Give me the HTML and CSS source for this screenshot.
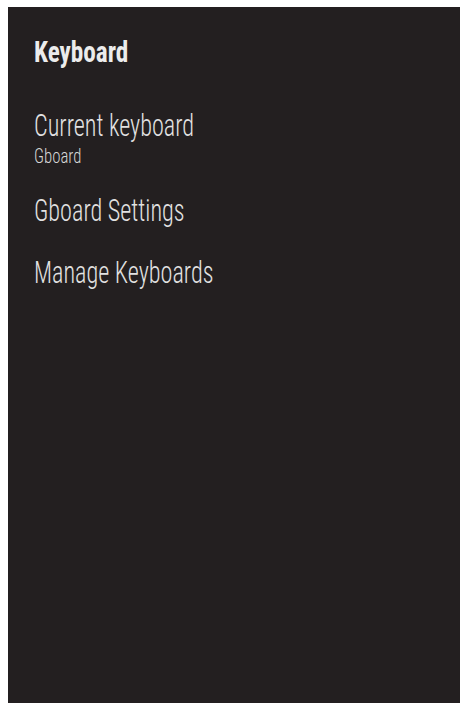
FILE: index.html
```html
<!doctype html>
<html lang="en">
<head>
    <meta charset="UTF-8">
    <meta name="viewport" content="width=device-width, initial-scale=1.0">
    <title>Keyboard</title>
    <link rel="stylesheet" href="styles.css">
</head>
<body>
    <div class="panel">
        <h1 class="panel-title"><span class="squeeze">Keyboard</span></h1>
        <ul class="menu">
            <li class="menu-item two-line">
                <span class="item-title squeeze">Current keyboard</span>
                <span class="item-sub squeeze">Gboard</span>
            </li>
            <li class="menu-item">
                <span class="item-title squeeze">Gboard Settings</span>
            </li>
            <li class="menu-item">
                <span class="item-title squeeze">Manage Keyboards</span>
            </li>
        </ul>
    </div>
</body>
</html>
```
FILE: styles.css
```css
*{
    margin: 0;
    padding: 0;
}
body{
    background-color: #fff;
    padding: 7px 8px 0 8px;
    font-family: "Roboto Condensed", Roboto, sans-serif;
}
.panel{
    width: 452px;
    height: 696px;
    background-color: #231f20;
    padding: 27px 26px 0 26px;
    box-sizing: border-box;
    overflow: hidden;
}
/* the font is narrower than anything installed, so squeeze it sideways */
.squeeze{
    display: inline-block;
    transform-origin: left center;
    white-space: nowrap;
}
.panel-title{
    font-size: 29px;
    font-weight: 700;
    line-height: 36px;
    color: #ececec;
    margin-bottom: 25px;
}
.panel-title .squeeze{
    transform: scaleX(0.87);
}
.menu{
    list-style: none;
}
.menu-item{
    padding: 15px 0;
    display: flex;
    flex-direction: column;
    align-items: flex-start;
}
.menu-item.two-line{
    padding-bottom: 10px;
}
.item-title{
    font-size: 31px;
    font-weight: 300;
    line-height: 32px;
    color: #e2e2e2;
    transform: scaleX(0.78);
}
.item-sub{
    font-size: 20px;
    font-weight: 300;
    line-height: 28px;
    color: #d6d6d6;
    transform: scaleX(0.84);
}
```
